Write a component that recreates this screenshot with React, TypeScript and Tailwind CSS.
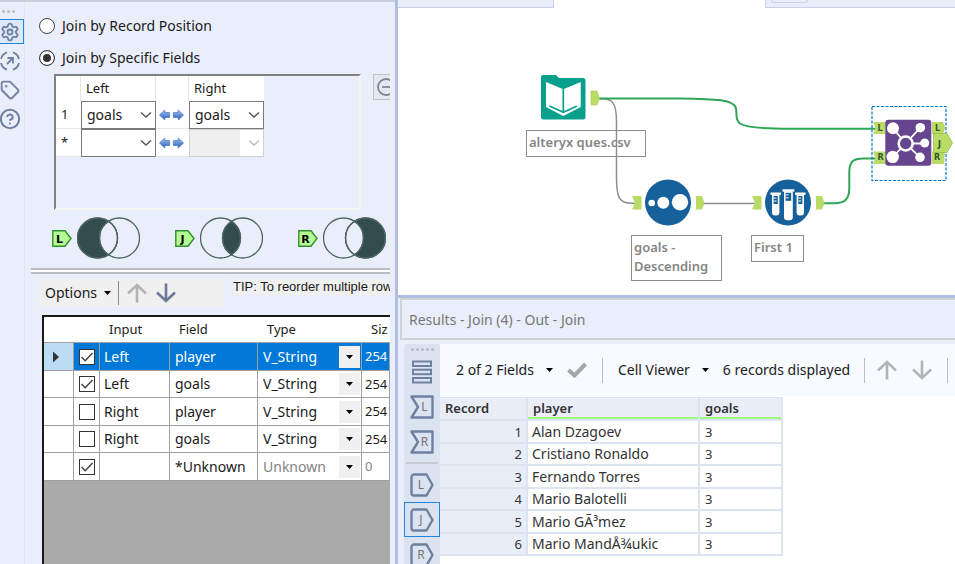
import React from "react";
import clsx from "clsx";
import { HelpCircle, Settings, Tag } from "lucide-react";

const FIELDS = [
  { checked: true, input: "Left", field: "player", type: "V_String", size: "254" },
  { checked: true, input: "Left", field: "goals", type: "V_String", size: "254" },
  { checked: false, input: "Right", field: "player", type: "V_String", size: "254" },
  { checked: false, input: "Right", field: "goals", type: "V_String", size: "254" },
  { checked: true, input: "", field: "*Unknown", type: "Unknown", size: "0" },
];

const RECORDS = [
  { player: "Alan Dzagoev", goals: 3 },
  { player: "Cristiano Ronaldo", goals: 3 },
  { player: "Fernando Torres", goals: 3 },
  { player: "Mario Balotelli", goals: 3 },
  { player: "Mario GÃ³mez", goals: 3 },
  { player: "Mario MandÅ¾ukic", goals: 3 },
];

const Caret = () => (
  <svg width="7" height="4" viewBox="0 0 7 4" className="shrink-0">
    <path d="M0 0h7L3.500 4z" fill="#000" />
  </svg>
);

const Arrow = ({ down }: { down?: boolean }) => (
  <svg width="20" height="20" viewBox="0 0 20 20" fill="none" stroke="currentColor" strokeWidth="2.600">
    <path d={down ? "M10 0.500V18M1 9.500L10 18L19 9.500" : "M10 19.500V2M1 10.500L10 2L19 10.500"} />
  </svg>
);

const Chevron = ({ muted }: { muted?: boolean }) => (
  <svg
    width="12"
    height="7"
    viewBox="0 0 12 7"
    className="pointer-events-none absolute right-1 top-1/2 -translate-y-1/2"
  >
    <path d="M1 1l5 4.500L11 1" fill="none" stroke={muted ? "#bdbdbd" : "#555"} strokeWidth="1.400" />
  </svg>
);

const Grip = ({ count }: { count: number }) => (
  <div className="flex gap-[2px]">
    {Array.from({ length: count }, (_, i) => (
      <span key={i} className="size-[3px] rounded-full bg-[#b9bcc4]" />
    ))}
  </div>
);

/* ---------- configuration panel ---------- */

const SwapArrows = () => (
  <svg width="25" height="12" viewBox="0 0 26 12" className="ml-[3px]">
    <defs>
      <linearGradient id="swap" x1="0" y1="0" x2="0" y2="1">
        <stop offset="0" stopColor="#a9cdf4" />
        <stop offset="1" stopColor="#2356b5" />
      </linearGradient>
    </defs>
    <path d="M0.500 6L6 0.800V3.500H11V8.500H6V11.200z" fill="url(#swap)" stroke="#3b6fc4" strokeWidth="0.700" />
    <path d="M25.500 6L20 0.800V3.500H15V8.500H20V11.200z" fill="url(#swap)" stroke="#3b6fc4" strokeWidth="0.700" />
  </svg>
);

const RailButton = ({ label, active, children }: { label: string; active?: boolean; children: React.ReactNode }) => (
  <button
    aria-label={label}
    className={clsx(
      "flex h-[25px] w-6 items-center justify-center pr-1 text-[#6f80a0]",
      active && "border border-l-0 border-[#1c86e0] bg-[#dfe8f8]"
    )}
  >
    {children}
  </button>
);

const ConfigRail = () => (
  <nav className="flex w-[25px] shrink-0 flex-col gap-1 border-r border-[#e2e6f0] pt-2">
    <div className="pb-[2px] pl-[2px]">
      <Grip count={3} />
    </div>
    <RailButton label="Configuration" active>
      <Settings size={20} strokeWidth={2.2} className="shrink-0" />
    </RailButton>
    <RailButton label="Navigation">
      <svg width="20" height="20" viewBox="0 0 20 20" fill="none" stroke="currentColor" strokeWidth="1.800" className="shrink-0">
        <path d="M1 8A9.200 9.200 0 0 1 7 1.300M13 1.300A9.200 9.200 0 0 1 19 8M19 12A9.200 9.200 0 0 1 13 18.700M7 18.700A9.200 9.200 0 0 1 1 12" />
        <path d="M7 13L12.500 7.500M7.500 7H13V12.500" />
      </svg>
    </RailButton>
    <RailButton label="Annotation">
      <Tag size={20} strokeWidth={2.2} className="shrink-0" />
    </RailButton>
    <RailButton label="Help">
      <HelpCircle size={22} strokeWidth={2.2} className="shrink-0" />
    </RailButton>
  </nav>
);

const JoinMode = ({ label, checked }: { label: string; checked?: boolean }) => (
  <label className="flex h-8 items-center gap-[7px] text-sm">
    <input
      type="radio"
      name="join-mode"
      defaultChecked={checked}
      className="size-4 appearance-none rounded-full border border-[#444] bg-white checked:bg-[#333] checked:shadow-[inset_0_0_0_3px_#fff]"
    />
    {label}
  </label>
);

const FieldSelect = ({ label, value, disabled }: { label: string; value: string; disabled?: boolean }) => (
  <div className="relative h-full">
    <select
      aria-label={label}
      disabled={disabled}
      defaultValue={value}
      className="block h-full w-full appearance-none border border-[#7a7a7a] bg-white pl-[5px] pr-4 text-sm disabled:border-[#d0d0d0] disabled:bg-linear-to-r disabled:from-[#efefef] disabled:from-68% disabled:to-white disabled:to-68%"
    >
      <option value={value}>{value}</option>
    </select>
    <Chevron muted={disabled} />
  </div>
);

const JoinFields = () => (
  <div className="h-[136px] w-[307px] shrink-0 border-2 border-[#808080] border-b-[#f4f4f4] border-r-[#f4f4f4]">
    <table className="w-[208px] table-fixed border-separate border-spacing-0 bg-white text-[13px]">
      <colgroup>
        <col className="w-[25px]" />
        <col className="w-[75px]" />
        <col className="w-[33px]" />
        <col className="w-[75px]" />
      </colgroup>
      <thead>
        <tr className="h-[25px] text-left">
          <th className="border-r border-[#e6e6e6] p-0" />
          <th className="border-r border-[#e6e6e6] p-0 pl-[5px] font-normal">Left</th>
          <th className="border-r border-[#e6e6e6] p-0" />
          <th className="p-0 pl-[5px] font-normal">Right</th>
        </tr>
      </thead>
      <tbody>
        {["1", "*"].map((row, i) => (
          <tr key={row} className="h-[28px]">
            <td className="border-b border-[#e6e6e6] p-0 pl-[5px]">{row}</td>
            <td className="h-[28px] p-0">
              <FieldSelect label={`Left field ${row}`} value={i === 0 ? "goals" : ""} />
            </td>
            <td className="border-b border-[#e6e6e6] p-0">
              <SwapArrows />
            </td>
            <td className="h-[28px] p-0">
              <FieldSelect label={`Right field ${row}`} value={i === 0 ? "goals" : ""} disabled={i === 1} />
            </td>
          </tr>
        ))}
      </tbody>
    </table>
  </div>
);

const Venn = ({ side }: { side: "L" | "J" | "R" }) => (
  <div className="flex items-center gap-[5px]">
    <svg width="20" height="17" viewBox="0 0 20 17">
      <path d="M0.800 0.800H13L19 8.500L13 16.200H0.800z" fill="#b4fd94" stroke="#2f8f2f" strokeWidth="1.400" />
      <text x="7.500" y="12.500" textAnchor="middle" fontSize="11" fontWeight="bold" fontFamily="DejaVu Sans, sans-serif">
        {side}
      </text>
    </svg>
    <svg width="63" height="42" viewBox="0 0 63 42" fill="none" stroke="#4c6464" strokeWidth="1.300">
      {side === "L" && <circle cx="20.500" cy="21" r="20" fill="#334d4d" />}
      {side === "R" && <circle cx="42.500" cy="21" r="20" fill="#334d4d" />}
      <path
        d="M31.500 4.300A20 20 0 0 1 31.500 37.700A20 20 0 0 1 31.500 4.300z"
        fill={side === "J" ? "#334d4d" : "#eaeefa"}
      />
      <circle cx="20.500" cy="21" r="20" />
      <circle cx="42.500" cy="21" r="20" />
    </svg>
  </div>
);

const OutputFields = () => (
  <div className="min-h-0 flex-1 overflow-hidden border-l-2 border-t-2 border-[#1a1a1a] bg-[#ababab]">
    <table className="w-full table-fixed border-separate border-spacing-0 bg-white text-[13px]">
      <colgroup>
        <col className="w-[30px]" />
        <col className="w-[26px]" />
        <col className="w-[70px]" />
        <col className="w-[88px]" />
        <col className="w-[104px]" />
        <col />
      </colgroup>
      <thead>
        <tr className="h-[26px] text-left *:border-b *:border-r *:border-b-[#a0a0a0] *:border-r-[#e2e2e2] *:p-0 *:pt-px *:font-normal last:*:border-r-0">
          <th />
          <th />
          <th>
            <span className="pl-[9px]">Input</span>
          </th>
          <th>
            <span className="pl-[9px]">Field</span>
          </th>
          <th>
            <span className="pl-[9px]">Type</span>
          </th>
          <th>
            <span className="pl-[9px]">Siz</span>
          </th>
        </tr>
      </thead>
      <tbody className="text-sm">
        {FIELDS.map((f, i) => (
          <tr
            key={i}
            className={clsx(
              "odd:h-[28px] even:h-[27px] *:border-b *:border-r *:border-[#a0a0a0] *:p-0",
              i === 0 && "bg-[#0078d7] text-white"
            )}
          >
            <td className={i === 0 ? "bg-[#bcdcf4]" : ""}>
              {i === 0 && (
                <svg width="8" height="12" viewBox="0 0 8 12" className="ml-2">
                  <path d="M1 0.500L7 6L1 11.500z" fill="#333" />
                </svg>
              )}
            </td>
            <td>
              <label className="relative mx-auto block size-4">
                <input
                  type="checkbox"
                  aria-label={`Select ${f.input} ${f.field}`}
                  defaultChecked={f.checked}
                  className="peer block size-4 appearance-none border border-[#333] bg-white"
                />
                <svg
                  width="16"
                  height="16"
                  viewBox="0 0 16 16"
                  className="pointer-events-none absolute inset-0 hidden peer-checked:block"
                >
                  <path d="M2.500 8L6.200 11.700L13.500 4" fill="none" stroke="#444" strokeWidth="1.500" />
                </svg>
              </label>
            </td>
            <td>
              <span className="pl-1">{f.input}</span>
            </td>
            <td>
              <span className="pl-[5px]">{f.field}</span>
            </td>
            <td>
              <div className="relative pr-px">
                <select
                  aria-label={`Type of ${f.input} ${f.field}`}
                  defaultValue={f.type}
                  className={clsx("block h-[22px] w-full appearance-none pl-[5px] pr-6", f.type === "Unknown" && "text-[#838383]")}
                >
                  <option>{f.type}</option>
                </select>
                <span className="pointer-events-none absolute inset-y-0 right-px flex w-[21px] items-center justify-center bg-[#f0f0f0]">
                  <Caret />
                </span>
              </div>
            </td>
            <td className="text-[13px]">
              <span className={clsx("pl-[3px]", f.type === "Unknown" && "text-[#838383]")}>{f.size}</span>
            </td>
          </tr>
        ))}
      </tbody>
    </table>
  </div>
);

const ConfigPanel = () => (
  <aside className="flex w-[395px] shrink-0 flex-col border-t-2 border-[#c9ced9] pr-[5px]">
    <div className="flex min-h-0 flex-1">
      <ConfigRail />
      <div className="flex min-w-0 flex-1 flex-col overflow-hidden">
        <fieldset className="pl-[14px] pt-2">
          <JoinMode label="Join by Record Position" />
          <JoinMode label="Join by Specific Fields" checked />
        </fieldset>
        <div className="flex gap-3 pl-[29px]">
          <JoinFields />
          <button
            aria-label="Remove"
            className="flex h-[26px] w-[26px] shrink-0 items-center justify-center border border-[#bfc2c8] bg-[#e4e8f0]"
          >
            <svg width="18" height="18" viewBox="0 0 18 18" fill="none" stroke="#7d8698" strokeWidth="1.800">
              <circle cx="9" cy="9" r="8" />
              <path d="M5 9h8" />
            </svg>
          </button>
        </div>
        <div className="flex gap-[35px] pl-[27px] pt-[7px]">
          <Venn side="L" />
          <Venn side="J" />
          <Venn side="R" />
        </div>
        <div className="ml-[6px] mt-[9px] h-[6px] shrink-0 border-y-2 border-[#bbbdc4] bg-white" />
        <div className="ml-[14px] mt-[5px] flex shrink-0 items-start gap-[9px]">
          <div className="flex h-[28px] w-[185px] shrink-0 items-center bg-[#f0f0f0] pl-[6px]">
            <button className="flex items-center gap-[7px] text-sm">
              Options <Caret />
            </button>
            <span className="ml-[7px] h-6 w-px bg-[#8a8a8a]" />
            <button aria-label="Move up" className="ml-2 text-[#b4b4b4]">
              <Arrow />
            </button>
            <button aria-label="Move down" className="ml-[9px] text-[#6b7a99]">
              <Arrow down />
            </button>
          </div>
          <p className="whitespace-nowrap bg-[#f0f0f0] font-['Liberation_Sans',sans-serif] text-[13px] leading-4">
            TIP: To reorder multiple row
          </p>
        </div>
        <div className="ml-[17px] mt-2 flex min-h-0 flex-1 flex-col">
          <OutputFields />
        </div>
      </div>
    </div>
  </aside>
);

/* ---------- workflow canvas ---------- */

const Annotation = ({ className, children }: { className: string; children: React.ReactNode }) => (
  <div
    className={clsx(
      "absolute border border-[#8c8c8c] px-[2px] py-[2px] text-[13px] font-semibold leading-[19px] text-[#858585]",
      className
    )}
  >
    {children}
  </div>
);

const Tube = ({ x, y, w, h }: { x: number; y: number; w: number; h: number }) => (
  <g>
    <rect x={x - 1.5} y={y} width={w + 3} height="2.400" fill="#fff" />
    <path d={`M${x} ${y + 2}h${w}v${h - 5}a3 3 0 0 1 -3 3h${6 - w}a3 3 0 0 1 -3 -3z`} fill="#fff" />
    <path d={`M${x + 1.6} ${y + 3.5}h${w - 3.2}v8h${3.2 - w}z`} fill="#16609c" />
    <path d={`M${x + 1.6} ${y + 5.5}h3M${x + 1.6} ${y + 8.5}h3`} stroke="#fff" strokeWidth="1" />
  </g>
);

const Workflow = () => (
  <div className="relative h-[287px] shrink-0 overflow-hidden bg-white">
    <svg width="557" height="287" viewBox="398 8 557 287" fill="none" className="absolute left-0 top-0">
      <g stroke="#8e8e8e" strokeWidth="1.500">
        <path d="M599 98.500C612 98.500 616.500 101 616.500 122V178C616.500 197 619 203.300 632 203.300H637" />
        <path d="M703 203.500H757" />
      </g>
      <g stroke="#2fa656" strokeWidth="2">
        <path d="M598 98.500H680C718 99 732 100 735.500 107C738 113 734 119 740 123.500C746 127.500 770 128.700 790 128.700H876" />
        <path d="M823 203.300H834C845 203.300 849.300 199 849.300 188V172C849.300 162 853 158.500 863 158.500H876" />
      </g>

      {/* input data */}
      <path d="M543 75H556L559 78H583a2.500 2.500 0 0 1 2.500 2.500V117a2.500 2.500 0 0 1 -2.500 2.500H543.500a2.500 2.500 0 0 1 -2.500 -2.500V77a2 2 0 0 1 2 -2z" fill="#08a08d" />
      <path d="M546 82L563.300 89.300L580.700 82V107L563.300 116L546 107z" fill="#fff" />
      <path d="M563.300 89V112M549.500 106L563.300 112.200L577 106" stroke="#08a08d" strokeWidth="1.700" />
      <path d="M591 91H597L599.500 98L597 105H591z" fill="#badc66" stroke="#a9c957" strokeWidth="0.600" />

      {/* sort */}
      <path d="M632 196H641.500V209.500H632L635 203z" fill="#badc66" />
      <circle cx="668" cy="202.500" r="23" fill="#16609c" />
      <circle cx="651.700" cy="203" r="3.300" fill="#fff" />
      <circle cx="663.300" cy="202.700" r="6" fill="#fff" />
      <circle cx="680" cy="202.200" r="8.200" fill="#fff" />
      <path d="M696 196H702L704.500 203L702 209.500H696z" fill="#badc66" />

      {/* sample */}
      <path d="M752 196H761.500V209.500H752L755 203z" fill="#badc66" />
      <circle cx="788" cy="202.500" r="23" fill="#16609c" />
      <Tube x={772} y={192.5} w={7.4} h={23} />
      <Tube x={784} y={189.3} w={8.8} h={31} />
      <Tube x={796.6} y={192.5} w={7.4} h={23} />
      <path d="M816 196H822L824.500 203L822 209.500H816z" fill="#badc66" />

      {/* join */}
      <rect x="872" y="106.500" width="74" height="74" stroke="#0078d7" strokeWidth="1.200" strokeDasharray="3 1.500" />
      <path d="M873 122H885.500V134H873L875.500 128zM873 151.500H885.500V164H873L875.500 158z" fill="#badc66" />
      <path d="M932 122H943L945.500 128L943 134H932zM932 151.500H945L944 164H932z" fill="#badc66" />
      <rect x="885.300" y="119.700" width="46" height="46" rx="3" fill="#66448e" />
      <path d="M905.700 143.500L893 128.300M905.700 143.500L920.300 127.700M905.700 143.500H924.700M905.700 143.500L920 157.300M905.700 143.500L892.700 157" stroke="#fff" strokeWidth="1.800" />
      <g fill="#fff">
        <circle cx="893" cy="128.300" r="6" />
        <circle cx="920.300" cy="127.700" r="4.800" />
        <circle cx="924.700" cy="143" r="4.500" />
        <circle cx="920" cy="157.300" r="4.800" />
        <circle cx="892.700" cy="157" r="6.200" />
      </g>
      <circle cx="905.700" cy="143.500" r="7" fill="#66448e" stroke="#fff" strokeWidth="2.600" />
      <path d="M933.500 133.500H947L952.500 143L947 152.500H933.500z" fill="#badc66" stroke="#98bb45" strokeWidth="0.800" />
      <g fill="#335a2c" fontFamily="DejaVu Sans, sans-serif" fontWeight="bold" fontSize="8" textAnchor="middle">
        <text x="880" y="131">L</text>
        <text x="880.500" y="160">R</text>
        <text x="937.500" y="131">L</text>
        <text x="937" y="160">R</text>
        <text x="939.500" y="146.500" fontSize="9">J</text>
      </g>
    </svg>
    <Annotation className="left-[128px] top-[122px] h-[27px] w-[120px]">alteryx ques.csv</Annotation>
    <Annotation className="left-[233px] top-[227px] h-[46px] w-[91px]">
      goals - <br />
      Descending
    </Annotation>
    <Annotation className="left-[353px] top-[227px] h-[27px] w-[53px]">First 1</Annotation>
  </div>
);

/* ---------- results window ---------- */

const ResultsRailButton = ({ label, active, children }: { label: string; active?: boolean; children: React.ReactNode }) => (
  <button
    aria-label={label}
    className={clsx("flex h-[35px] w-full shrink-0 items-center justify-center", active && "border border-[#1c86e0]")}
  >
    {children}
  </button>
);

const AnchorIcon = ({ kind, letter }: { kind: "in" | "out"; letter: string }) => (
  <svg width="24" height="24" viewBox="0 0 24 24" fill="none" stroke="#6f80a0" strokeWidth="2.400" strokeLinejoin="round">
    <path d={kind === "in" ? "M1.500 1.500H22.500V22.500H1.500L8 12z" : "M4 1.500H16.500L22.500 12L16.500 22.500H4A2.500 2.500 0 0 1 1.500 20V4A2.500 2.500 0 0 1 4 1.500z"} />
    <text
      x={kind === "in" ? 14.5 : 11}
      y="16"
      textAnchor="middle"
      fontSize="12"
      fontFamily="Noto Sans, sans-serif"
      fill="#757575"
      stroke="none"
    >
      {letter}
    </text>
  </svg>
);

const ResultsRail = () => (
  <nav className="flex w-9 shrink-0 flex-col items-center overflow-hidden rounded-t bg-[#dbe2f0] pt-1">
    <Grip count={5} />
    <div className="mt-[3px] w-full">
      <ResultsRailButton label="Messages">
        <svg width="20" height="24" viewBox="0 0 20 24" fill="none" stroke="#6f80a0" strokeWidth="2">
          <rect x="1" y="1.500" width="18" height="4.500" />
          <rect x="1" y="9.700" width="18" height="4.500" />
          <rect x="1" y="18" width="18" height="4.500" />
        </svg>
      </ResultsRailButton>
      <ResultsRailButton label="Input L">
        <AnchorIcon kind="in" letter="L" />
      </ResultsRailButton>
      <ResultsRailButton label="Input R">
        <AnchorIcon kind="in" letter="R" />
      </ResultsRailButton>
      <hr className="mx-[2px] my-[3px] border-t-2 border-[#c8cbd2]" />
      <ResultsRailButton label="Output L">
        <AnchorIcon kind="out" letter="L" />
      </ResultsRailButton>
      <ResultsRailButton label="Output J" active>
        <AnchorIcon kind="out" letter="J" />
      </ResultsRailButton>
      <ResultsRailButton label="Output R">
        <AnchorIcon kind="out" letter="R" />
      </ResultsRailButton>
    </div>
  </nav>
);

const Divider = () => <span className="h-[25px] w-px shrink-0 bg-[#bcbec4]" />;

const ResultsToolbar = () => (
  <div className="flex h-[52px] shrink-0 items-center whitespace-nowrap bg-[#f7faff] pl-4 text-sm">
    <button className="flex items-center gap-3">
      2 of 2 Fields <Caret />
    </button>
    <button aria-label="Apply" className="ml-[14px] mr-[15px]">
      <svg width="20" height="16" viewBox="0 0 20 16">
        <path d="M1.500 8L7.500 13.500L18.500 2" fill="none" stroke="#a6a6a6" strokeWidth="4" />
      </svg>
    </button>
    <Divider />
    <button className="ml-[15px] flex items-center gap-3">
      Cell Viewer <Caret />
    </button>
    <span className="ml-[14px] mr-[14px]">6 records displayed</span>
    <Divider />
    <button aria-label="Previous" className="ml-3 text-[#b4b4b4]">
      <Arrow />
    </button>
    <button aria-label="Next" className="ml-[15px] mr-[15px] text-[#b4b4b4]">
      <Arrow down />
    </button>
    <Divider />
  </div>
);

const ResultsTable = () => (
  <table className="mt-px w-[343px] table-fixed border-separate border-spacing-0 border-t border-[#dce4f2] text-[13px] text-[#333]">
    <colgroup>
      <col className="w-[88px]" />
      <col className="w-[172px]" />
      <col className="w-[83px]" />
    </colgroup>
    <thead>
      <tr className="h-[23px] bg-[#e9edf8] text-left *:border-r-2 *:border-[#dce4f2] *:p-0 *:font-semibold">
        <th className="border-b-2">
          <span className="pl-[5px]">Record</span>
        </th>
        {["player", "goals"].map((name) => (
          <th key={name} className="border-b-2">
            <div className="h-[21px] border-b-2 border-[#9cfb78] pl-[5px] leading-[20px]">{name}</div>
          </th>
        ))}
      </tr>
    </thead>
    <tbody className="text-sm leading-5">
      {RECORDS.map((r, i) => (
        <tr key={r.player} className="odd:h-[23px] even:h-[22px] *:border-b-2 *:border-r-2 *:border-[#dce4f2] *:p-0">
          <td className="bg-[#e9edf8] text-right text-[13px] leading-5">
            <span className="pr-1">{i + 1}</span>
          </td>
          <td>
            <span className="pl-1">{r.player}</span>
          </td>
          <td className="text-[13px] leading-5">
            <span className="pl-[5px]">{r.goals}</span>
          </td>
        </tr>
      ))}
    </tbody>
  </table>
);

const Results = () => (
  <section className="flex min-h-0 flex-1 flex-col border-t-[3px] border-[#b0bfe0] pl-[2px]">
    <header className="flex h-[42px] shrink-0 items-center border-2 border-r-0 border-[#d0d2d6] pl-[7px] pt-[2px] text-sm text-[#777]">
      Results - Join (4) - Out - Join
    </header>
    <div className="flex min-h-0 flex-1 pl-1 pt-1">
      <ResultsRail />
      <div className="flex min-w-0 flex-1 flex-col overflow-hidden bg-white">
        <ResultsToolbar />
        <ResultsTable />
      </div>
    </div>
  </section>
);

const App = () => {
  return (
    <div className="flex h-screen overflow-hidden bg-[#eaeefa] font-['Noto_Sans',sans-serif] text-[#1a1a1a]">
      <ConfigPanel />
      <main className="flex min-w-0 flex-1 flex-col border-l-[3px] border-[#b0bfe0]">
        <div className="flex h-2 shrink-0 bg-white">
          <div className="w-[156px] border-b border-r border-[#c9d3e8] bg-[#eaeefa]" />
          <div className="ml-[211px] flex-1 border-b border-l border-[#c9d3e8] bg-[#eaeefa] pl-[5px]">
            <div className="h-[3px] w-[37px] rounded-b border border-t-0 border-[#c9d3e8]" />
          </div>
        </div>
        <Workflow />
        <Results />
      </main>
    </div>
  );
};

export default App;
